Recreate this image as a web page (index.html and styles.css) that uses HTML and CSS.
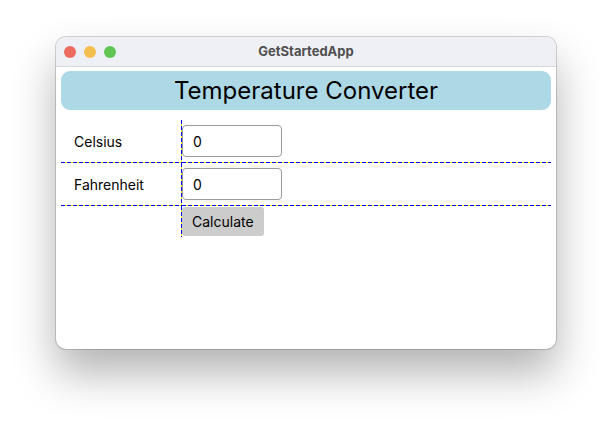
FILE: index.html
```html
<!DOCTYPE html>
<html>
<head>
<meta charset="utf-8">
<link rel="stylesheet" href="styles.css">
</head>
<body>
<div class="window">
  <div class="titlebar">
    <div class="lights">
      <span class="light red"></span>
      <span class="light yellow"></span>
      <span class="light green"></span>
    </div>
    <div class="wtitle">GetStartedApp</div>
  </div>
  <div class="content">
    <div class="header">Temperature Converter</div>
    <div class="grid">
      <div class="cell label hline vline">Celsius</div>
      <div class="cell field hline"><input class="input" type="text" value="0"></div>
      <div class="cell label hline vline">Fahrenheit</div>
      <div class="cell field hline"><input class="input" type="text" value="0"></div>
      <div class="cell vline"></div>
      <div class="cell btncell"><button class="btn">Calculate</button></div>
    </div>
  </div>
</div>
</body>
</html>
```
FILE: styles.css
```css
html, body {
  margin: 0;
  padding: 0;
  background: #ffffff;
  width: 612px;
  height: 423px;
  overflow: hidden;
}
body {
  padding: 37px 0 0 56px;
  box-sizing: border-box;
  font-family: Inter, "Noto Sans", sans-serif;
}
.window {
  width: 500px;
  height: 312px;
  background: #ffffff;
  border-radius: 10px;
  box-shadow: 0 0 0 1px rgba(0,0,0,0.16), 0 24px 44px rgba(0,0,0,0.30);
  overflow: hidden;
  display: flex;
  flex-direction: column;
}
.titlebar {
  height: 29px;
  background: #eff0f5;
  border-bottom: 1px solid #d8d8dc;
  position: relative;
  display: flex;
  align-items: center;
  justify-content: center;
  flex-shrink: 0;
}
.lights {
  position: absolute;
  left: 8px;
  top: 9px;
  display: flex;
  gap: 8px;
}
.light {
  width: 12px;
  height: 12px;
  border-radius: 50%;
  display: block;
}
.red { background: #ed6a5e; }
.yellow { background: #f5bf4f; }
.green { background: #61c554; }
.wtitle {
  font-size: 13px;
  font-weight: 700;
  color: #4f4f4f;
  margin-top: -2px;
}
.content {
  padding: 4px 5px 0 5px;
  display: flex;
  flex-direction: column;
}
.header {
  height: 39px;
  background: #add8e6;
  border-radius: 9px;
  display: flex;
  align-items: center;
  justify-content: center;
  font-size: 24px;
  color: #000;
}
.grid {
  margin-top: 10px;
  display: grid;
  grid-template-columns: 121px 1fr;
  grid-template-rows: 43px 43px 31px;
}
.cell {
  display: flex;
  align-items: center;
  background-repeat: no-repeat;
}
.label {
  padding-left: 13px;
  font-size: 14px;
  color: #000;
}
.hline {
  background-image: repeating-linear-gradient(90deg, #0000ff 0 4px, #ffff00 4px 6px);
  background-size: 100% 1px;
  background-position: left bottom;
}
.vline {
  position: relative;
}
.vline::after {
  content: "";
  position: absolute;
  right: 0;
  top: 0;
  width: 1px;
  height: 100%;
  background: repeating-linear-gradient(180deg, #0000ff 0 4px, #ffff00 4px 6px);
}
.field {
  align-items: flex-start;
  padding-top: 5px;
}
.input {
  width: 100px;
  height: 32px;
  box-sizing: border-box;
  border: 1px solid #9a9a9a;
  border-radius: 4px;
  padding: 0 0 0 10px;
  font-family: Inter, "Noto Sans", sans-serif;
  font-size: 14px;
  color: #000;
  outline: none;
  margin: 0;
}
.btncell {
  align-items: flex-start;
  padding-top: 1px;
}
.btn {
  height: 29px;
  background: #cccccc;
  border: none;
  border-radius: 3px;
  padding: 0 10px;
  font-family: Inter, "Noto Sans", sans-serif;
  font-size: 14px;
  color: #000;
  margin: 0;
}
```
